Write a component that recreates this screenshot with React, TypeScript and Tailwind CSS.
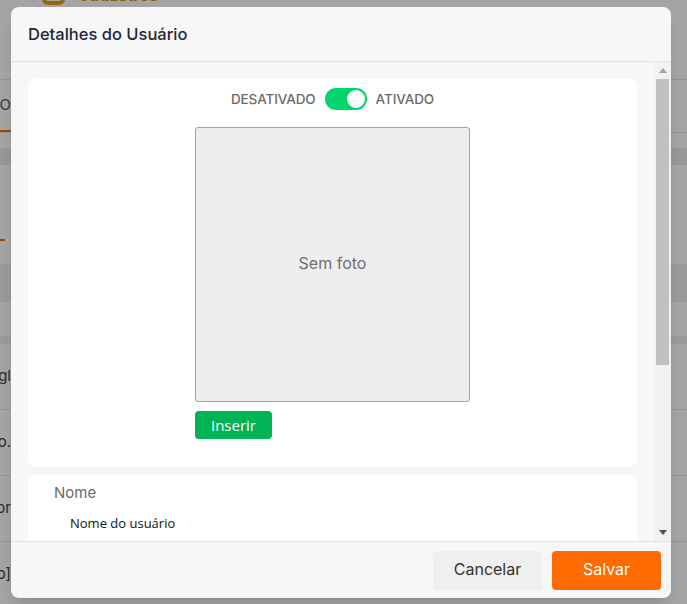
import { useState } from "react";

const font = { fontFamily: "Inter, 'Noto Sans', sans-serif" };
const uiFont = { fontFamily: "'Open Sans', 'Noto Sans', sans-serif" };

/* Página de fundo (fica escurecida pelo overlay do modal) */
function BackgroundPage() {
  const rows = ["Região Sul gl", "Contato.", "Fornecedor", "[Grupo]"];
  return (
    <div className="flex flex-col w-full h-full bg-white text-[#333]" style={font}>
      <div className="h-[80px] shrink-0 border-b border-[#e5e5e5] overflow-hidden">
        <div className="flex items-center -mt-[15px] h-[20px]">
          <span className="w-[38px] text-[15px] text-[#555] -ml-[18px]">Sistema</span>
          <span className="ml-[22px] w-[23px] h-[20px] rounded-md border-[4px] border-[#e0a020]" />
          <span className="ml-[13px] text-[16px] font-bold text-[#e58a00]">Cadastros</span>
        </div>
      </div>
      <div className="h-[53px] shrink-0 flex items-end border-b border-[#e5e5e5]">
        <div className="w-[11px] h-full flex items-center justify-end border-b-2 border-[#ff6b00] whitespace-nowrap">
          <span className="text-[15px] text-[#555]">PRODUTO</span>
        </div>
      </div>
      <div className="h-[17px] shrink-0 mt-[15px] bg-[#ececec]" />
      <div className="h-[76px] shrink-0 flex items-end">
        <div className="w-[5px] h-[2px] bg-[#ff6b00]" />
      </div>
      <div className="h-[38px] shrink-0 mt-[23px] bg-[#f0f0f0]" />
      <div className="h-[34px] shrink-0" />
      <div className="h-[8px] shrink-0 bg-[#f0f0f0]" />
      {rows.map((r) => (
        <div key={r} className="h-[66px] shrink-0 border-b border-[#e5e5e5]">
          <div className="h-full w-[11px] flex items-center justify-end text-[15px] text-[#444] whitespace-nowrap">
            {r}
          </div>
        </div>
      ))}
    </div>
  );
}

function Toggle({ on, onChange }: { on: boolean; onChange: () => void }) {
  return (
    <button
      onClick={onChange}
      className={`w-[42px] h-[22px] rounded-full p-[2px] flex ${
        on ? "bg-[#00d66b] justify-end" : "bg-[#ccc] justify-start"
      }`}
    >
      <span className="w-[18px] h-[18px] rounded-full bg-white" />
    </button>
  );
}

/* barra de rolagem desenhada (clássica, com setas) */
function Scrollbar() {
  return (
    <div className="w-[17px] shrink-0 bg-[#f1f1f1] flex flex-col items-center">
      <div className="h-[17px] w-full flex items-center justify-center">
        <svg width="8" height="5" viewBox="0 0 8 5">
          <path d="M0 5 L4 0 L8 5 Z" fill="#a3a3a3" />
        </svg>
      </div>
      <div className="w-[13px] h-[286px] bg-[#c1c1c1]" />
      <div className="flex-1" />
      <div className="h-[17px] w-full flex items-center justify-center">
        <svg width="8" height="5" viewBox="0 0 8 5">
          <path d="M0 0 L8 0 L4 5 Z" fill="#505050" />
        </svg>
      </div>
    </div>
  );
}

export default function App() {
  const [ativo, setAtivo] = useState(true);

  return (
    <div className="relative w-full h-[604px] overflow-hidden">
      <BackgroundPage />
      {/* overlay */}
      <div className="absolute inset-0 bg-black/[0.355]" />

      {/* modal */}
      <div
        className="absolute left-[11px] top-[7px] w-[660px] h-[591px] rounded-lg bg-[#f7f7f7] flex flex-col overflow-hidden shadow-lg"
        style={font}
      >
        <div className="h-[55px] shrink-0 px-[17px] flex items-center border-b border-[#e4e4e4]">
          <h2 className="text-[16.5px] font-medium text-[#1f2937]">Detalhes do Usuário</h2>
        </div>

        <div className="flex-1 min-h-0 flex">
          <div className="flex-1 overflow-hidden px-[17px] pt-[17px] space-y-[8px]">
            {/* foto + status */}
            <div className="bg-white rounded-lg pt-[9px] pb-[28px] flex flex-col items-center">
              <div className="flex items-center gap-[9px] text-[13.5px] font-medium text-[#6b6b6b] uppercase tracking-[-0.1px]">
                <span>Desativado</span>
                <Toggle on={ativo} onChange={() => setAtivo(!ativo)} />
                <span>Ativado</span>
              </div>
              <div className="mt-[17px] flex flex-col items-start">
                <div className="w-[275px] h-[275px] pb-[4px] bg-[#eeeeee] border border-[#a3a3a3] rounded-[3px] flex items-center justify-center text-[16px] text-[#6e6e73]">
                  Sem foto
                </div>
                <button
                  className="mt-[9px] w-[77px] h-[28px] rounded-[4px] bg-[#00b355] text-white text-[15px]"
                  style={uiFont}
                >
                  Inserir
                </button>
              </div>
            </div>

            {/* dados */}
            <div className="bg-white rounded-lg px-[26px] pt-[7px] pb-[20px]">
              <div className="text-[15px] text-[#6b6b6b]">Nome</div>
              <div className="mt-[9px] pl-[16px] text-[13px] text-[#111]" style={uiFont}>
                Nome do usuário
              </div>
              <div className="mt-[22px] text-[15px] text-[#6b6b6b]">E-mail</div>
              <div className="mt-[9px] pl-[16px] text-[13px] text-[#111]" style={uiFont}>
                email@exemplo.com
              </div>
            </div>
          </div>
          <Scrollbar />
        </div>

        <div className="h-[57px] shrink-0 border-t border-[#e4e4e4] flex items-start justify-end gap-[10px] pt-[9px] pr-[10px]">
          <button className="w-[109px] h-[39px] pb-[3px] rounded-[4px] bg-[#efefef] text-[16px] text-[#333]">
            Cancelar
          </button>
          <button className="w-[109px] h-[39px] pb-[3px] rounded-[4px] bg-[#ff6b00] text-[16px] text-white">
            Salvar
          </button>
        </div>
      </div>
    </div>
  );
}
